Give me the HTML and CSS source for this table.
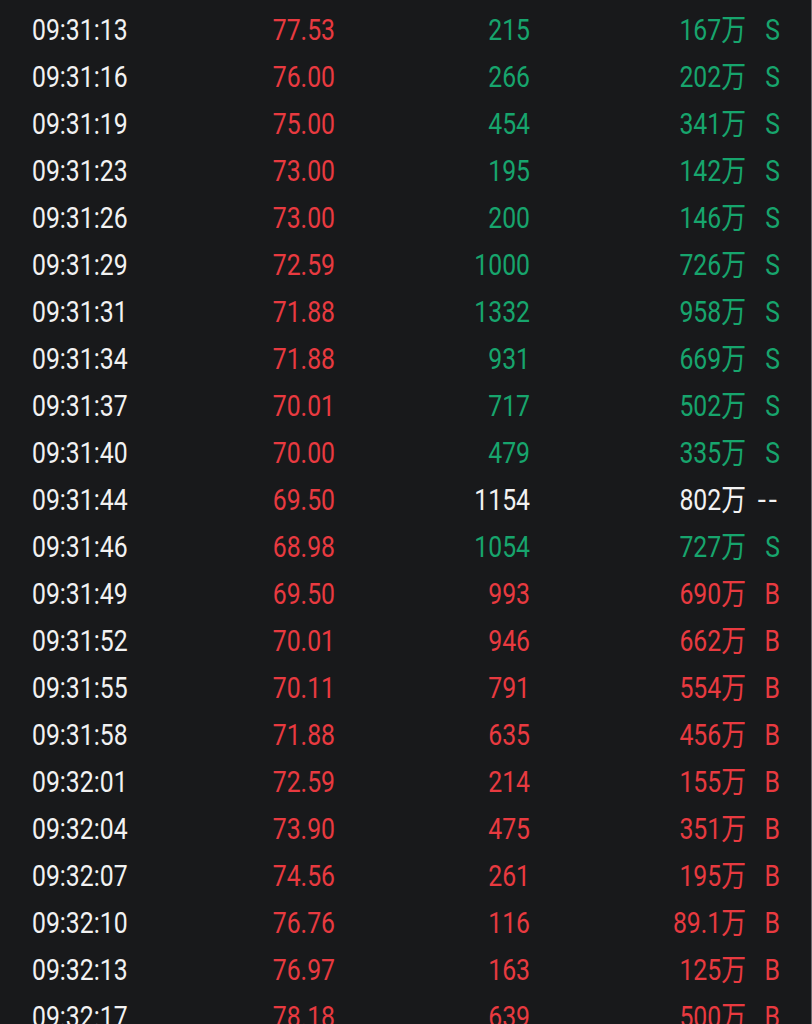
FILE: index.html
```html
<!DOCTYPE html>
<html lang="zh-CN">
<head>
<meta charset="utf-8">
<title>逐笔成交</title>
<link rel="stylesheet" href="styles.css">
</head>
<body>
<div class="ticks">
  <div class="row"><span class="time">09:31:13</span><span class="price up">77.53</span><span class="vol down">215</span><span class="amt down">167万</span><span class="flag down">S</span></div>
  <div class="row"><span class="time">09:31:16</span><span class="price up">76.00</span><span class="vol down">266</span><span class="amt down">202万</span><span class="flag down">S</span></div>
  <div class="row"><span class="time">09:31:19</span><span class="price up">75.00</span><span class="vol down">454</span><span class="amt down">341万</span><span class="flag down">S</span></div>
  <div class="row"><span class="time">09:31:23</span><span class="price up">73.00</span><span class="vol down">195</span><span class="amt down">142万</span><span class="flag down">S</span></div>
  <div class="row"><span class="time">09:31:26</span><span class="price up">73.00</span><span class="vol down">200</span><span class="amt down">146万</span><span class="flag down">S</span></div>
  <div class="row"><span class="time">09:31:29</span><span class="price up">72.59</span><span class="vol down">1000</span><span class="amt down">726万</span><span class="flag down">S</span></div>
  <div class="row"><span class="time">09:31:31</span><span class="price up">71.88</span><span class="vol down">1332</span><span class="amt down">958万</span><span class="flag down">S</span></div>
  <div class="row"><span class="time">09:31:34</span><span class="price up">71.88</span><span class="vol down">931</span><span class="amt down">669万</span><span class="flag down">S</span></div>
  <div class="row"><span class="time">09:31:37</span><span class="price up">70.01</span><span class="vol down">717</span><span class="amt down">502万</span><span class="flag down">S</span></div>
  <div class="row"><span class="time">09:31:40</span><span class="price up">70.00</span><span class="vol down">479</span><span class="amt down">335万</span><span class="flag down">S</span></div>
  <div class="row"><span class="time">09:31:44</span><span class="price up">69.50</span><span class="vol">1154</span><span class="amt">802万</span><span class="flag none">--</span></div>
  <div class="row"><span class="time">09:31:46</span><span class="price up">68.98</span><span class="vol down">1054</span><span class="amt down">727万</span><span class="flag down">S</span></div>
  <div class="row"><span class="time">09:31:49</span><span class="price up">69.50</span><span class="vol up">993</span><span class="amt up">690万</span><span class="flag up">B</span></div>
  <div class="row"><span class="time">09:31:52</span><span class="price up">70.01</span><span class="vol up">946</span><span class="amt up">662万</span><span class="flag up">B</span></div>
  <div class="row"><span class="time">09:31:55</span><span class="price up">70.11</span><span class="vol up">791</span><span class="amt up">554万</span><span class="flag up">B</span></div>
  <div class="row"><span class="time">09:31:58</span><span class="price up">71.88</span><span class="vol up">635</span><span class="amt up">456万</span><span class="flag up">B</span></div>
  <div class="row"><span class="time">09:32:01</span><span class="price up">72.59</span><span class="vol up">214</span><span class="amt up">155万</span><span class="flag up">B</span></div>
  <div class="row"><span class="time">09:32:04</span><span class="price up">73.90</span><span class="vol up">475</span><span class="amt up">351万</span><span class="flag up">B</span></div>
  <div class="row"><span class="time">09:32:07</span><span class="price up">74.56</span><span class="vol up">261</span><span class="amt up">195万</span><span class="flag up">B</span></div>
  <div class="row"><span class="time">09:32:10</span><span class="price up">76.76</span><span class="vol up">116</span><span class="amt up">89.1万</span><span class="flag up">B</span></div>
  <div class="row"><span class="time">09:32:13</span><span class="price up">76.97</span><span class="vol up">163</span><span class="amt up">125万</span><span class="flag up">B</span></div>
  <div class="row"><span class="time">09:32:17</span><span class="price up">78.18</span><span class="vol up">639</span><span class="amt up">500万</span><span class="flag up">B</span></div>
</div>
</body>
</html>
```

FILE: styles.css
```css
html, body {
  margin: 0;
  padding: 0;
  background: #18191b;
  height: 100%;
  overflow: hidden;
}

.ticks {
  box-sizing: border-box;
  width: 812px;
  height: 1024px;
  padding-top: 7px;
  border-right: 1px solid #6b6c6f;
  font-family: Roboto, "Noto Sans CJK SC", sans-serif;
  font-size: 29.5px;
  color: #f2f2f2;
  overflow: hidden;
}

.row {
  display: grid;
  grid-template-columns: 150px 153px 195px 216px 34px;
  padding-left: 32px;
  height: 47px;
  line-height: 47px;
  white-space: nowrap;
}

.row > span {
  transform: scaleX(0.84);
  transform-origin: right center;
  text-align: right;
}

.row > .time {
  transform-origin: left center;
  text-align: left;
}

.row > .flag.none {
  transform: none;
  letter-spacing: 3px;
}

.up { color: #e83a40; }
.down { color: #17a56d; }
```
